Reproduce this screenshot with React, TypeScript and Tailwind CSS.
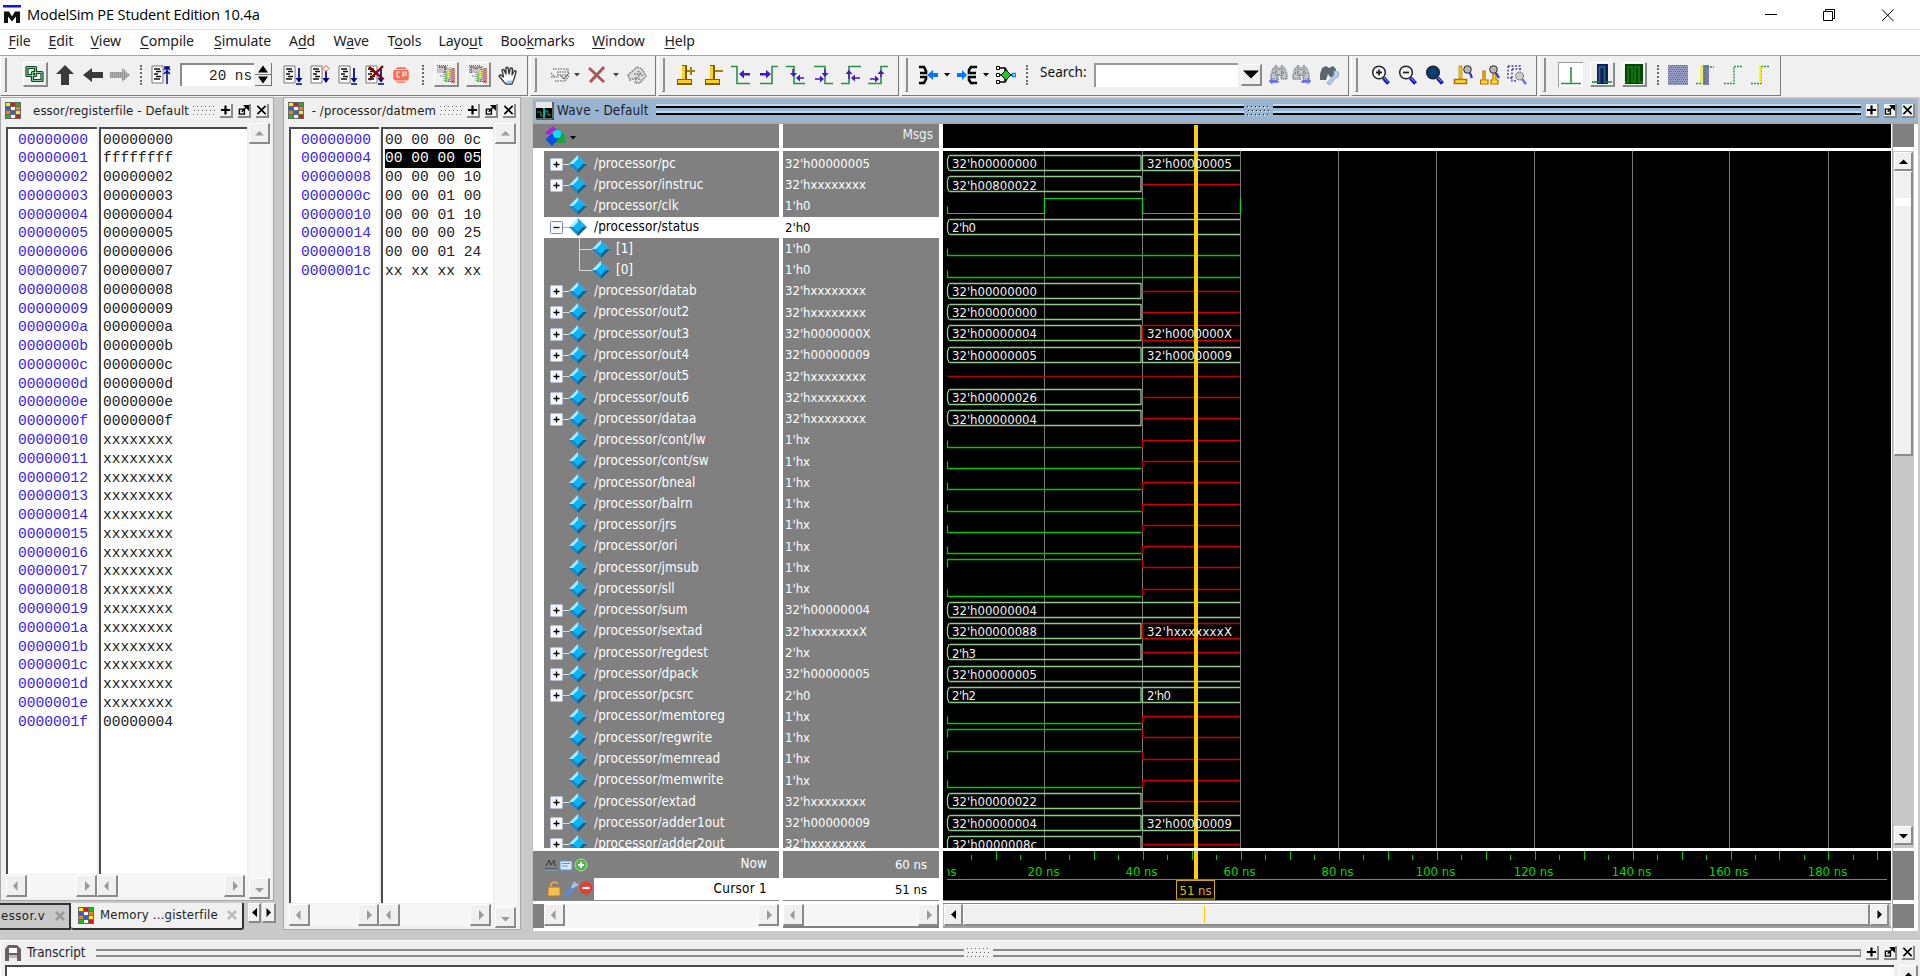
import React from "react";

type Kids = { children?: React.ReactNode; className?: string };

const UI = "font-['DejaVu_Sans_Condensed','DejaVu_Sans',sans-serif] [font-stretch:condensed]";
const RAISED = "bg-[#f0f0f0] border-t border-l border-t-white border-l-white border-b-2 border-r-2 border-b-[#8a8a8a] border-r-[#8a8a8a]";
const TROUGH = "bg-[#f7f7f7]";

/* ---------- small building blocks ---------- */

function Ic({ children, className = "" }: Kids) {
  return (
    <svg viewBox="0 0 20 20" className={"h-5 w-5 shrink-0 " + className} fill="none">
      {children}
    </svg>
  );
}

function Group({ children, className = "" }: Kids) {
  return (
    <div className={"flex h-[40px] shrink-0 items-center border-r border-r-[#7a7a7a] border-b border-b-[#7a7a7a] border-l border-l-white pb-[2px] " + className}>
      <div className="ml-[3px] mr-[5px] h-[34px] w-[3px] border-r-2 border-b border-[#8f8f8f]" />
      {children}
    </div>
  );
}

function Dots({ className = "" }: Kids) {
  return <div className={"w-0 shrink-0 border-l-2 border-dotted border-[#6a6a6a] h-[20px] " + className} />;
}

function Caret({ className = "" }: Kids) {
  return (
    <svg viewBox="0 0 6 4" className={"h-1 w-1.5 shrink-0 " + className}>
      <path d="M0 0h6L3 3.5z" fill="#000" />
    </svg>
  );
}

function Btn({ dir, off, className = "" }: { dir: "u" | "d" | "l" | "r"; off?: boolean; className?: string }) {
  const d = off
    ? { u: "M4 10.500h9L8.500 6z", d: "M4 8h9l-4.500 4.500z", l: "M9.500 4v10L5 9z", r: "M7 4v10l5-5z" }[dir]
    : { u: "M4 11h9L8.500 6.500z", d: "M4 7h9l-4.500 4.500z", l: "M11 4v9L6 8.500z", r: "M6.500 4v9l4.500-4.500z" }[dir];
  return (
    <div className={"flex shrink-0 items-center justify-center overflow-hidden " + RAISED + " " + className}>
      <svg viewBox="0 0 17 17" className="h-[17px] w-[17px] shrink-0">
        <path d={d} fill={off ? "#9a9a9a" : "#000"} />
      </svg>
    </div>
  );
}

function WinBtns({ className = "" }: Kids) {
  const b = "h-[14px] w-[13px] shrink-0 border-r-2 border-b-2 border-[#8a8a8a] bg-[#f3f3f3]";
  return (
    <div className={"flex shrink-0 items-center gap-[5px] " + className}>
      <svg viewBox="0 0 12 12" className={b}><path d="M6 1v10M1 6h10" stroke="#000" strokeWidth="2.400" /></svg>
      <svg viewBox="0 0 12 12" className={b}>
        <path d="M1.500 5h5.500v5.500h-5.500z M4 8l6-6" stroke="#000" strokeWidth="1.500" fill="none" />
        <path d="M5.500 0.500H12V7z" fill="#000" />
      </svg>
      <svg viewBox="0 0 12 12" className={b}><path d="M1.500 1.500l9 9M10.500 1.500l-9 9" stroke="#000" strokeWidth="1.800" /></svg>
    </div>
  );
}

function Grip({ dark }: { dark?: boolean }) {
  return (
    <svg width="23" height="10" className="shrink-0" shapeRendering="crispEdges">
      {[0, 1, 2].map((r) =>
        [0, 1, 2, 3, 4, 5].map((c) => (
          <g key={r + "-" + c}>
            <rect x={c * 4 + (r % 2)} y={r * 4} width="1" height="1" fill={dark ? "#222" : "#666"} />
            <rect x={c * 4 + 1 + (r % 2)} y={r * 4 + 1} width="1" height="1" fill="#fff" />
          </g>
        ))
      )}
    </svg>
  );
}

function MemIcon({ className = "" }: Kids) {
  const c = ["#f5f500", "#e81010", "#18b818", "#3060e0", "#fff", "#f08020", "#f08020", "#3060e0", "#f5f500", "#18c018", "#fff", "#e81010"];
  return (
    <svg viewBox="0 0 16 17" className={"h-[17px] w-4 shrink-0 " + className} shapeRendering="crispEdges">
      <rect width="16" height="17" fill="#666" />
      {c.map((f, i) => (
        <rect key={i} x={1 + (i % 3) * 5} y={1 + Math.floor(i / 3) * 4} width="4" height="3" fill={f} />
      ))}
    </svg>
  );
}

/* ---------- toolbar icons ---------- */

function DocIcon({ kind }: { kind: "up" | "down" | "step" | "over" | "kill" }) {
  return (
    <>
      <path d="M1 1h11v17H1z" fill="#fff" stroke="#777" />
      <path d="M3 4h6M5 6.500h5M3 9h4M5 11.500h5M3 14h6" stroke="#111" strokeWidth="1.600" />
      {kind === "up" && <path d="M16 19V2M13 5l3-3 3 3M13 2h6M13 9l3-3 3 3" stroke="#000090" strokeWidth="1.500" />}
      {(kind === "down" || kind === "over" || kind === "kill") && <path d="M16 3v14M13 19h6" stroke="#000090" strokeWidth="1.700" />}
      {(kind === "down" || kind === "over" || kind === "kill") && <path d="M12.500 13h7l-3.500 4.500z" fill="#000090" />}
      {kind === "step" && (
        <>
          <path d="M16 6v11" stroke="#000090" strokeWidth="1.700" />
          <path d="M12.500 13h7L16 18z" fill="#000090" />
          <path d="M16 0.500l3 3-3 3-3-3z" fill="#fff" stroke="#f04040" />
        </>
      )}
      {kind === "kill" && <path d="M4 2l14 12M18 1L4 15" stroke="#8b0000" strokeWidth="2.400" />}
    </>
  );
}

function BoxBtn({ children, className = "" }: Kids) {
  return (
    <div className={"flex h-[25px] w-[25px] shrink-0 items-center justify-center " + RAISED + " " + className}>{children}</div>
  );
}

function Binoc({ dir }: { dir?: "l" | "r" }) {
  return (
    <>
      <path d="M4 4l3-3 3 3 3-3 3 3 2 6v4h-6v-4H9v4H2v-4z" fill="#c0c6ca" />
      <path d="M4 4l3-3 3 3 3-3 3 3 2 6v4h-6v-4H9v4H2v-4zM4 8h4M12 8h4M7 4v7M13 4v7" stroke="#7a848a" strokeDasharray="1 1" strokeWidth="2" />
      {dir === "l" && <path d="M-0.500 16l4-3.500v2h5l2 3.500H3.500v2z" fill="#6d6df0" stroke="#fff" strokeDasharray="1 1.500" strokeWidth=".7" />}
      {dir === "r" && <path d="M20.500 16l-4-3.500v2h-5l-2 3.500h7v2z" fill="#6d6df0" stroke="#fff" strokeDasharray="1 1.500" strokeWidth=".7" />}
    </>
  );
}

function Lens({ fill = "#f8f8f8", sign = "" }: { fill?: string; sign?: string }) {
  return (
    <>
      <path d="M12.500 13l5 5.500" stroke="#1818b8" strokeWidth="4" />
      <path d="M12 12l5 5" stroke="#7aa0ff" strokeWidth="1" />
      <circle cx="8" cy="7.500" r="6.300" fill={fill} stroke="#222" strokeWidth="1.500" />
      <path d={sign} stroke="#222" strokeWidth="1.800" />
    </>
  );
}

function CursorPin() {
  return (
    <g>
      <path d="M6 1h3v13H6z" fill="#f5cc00" stroke="#9c7400" strokeWidth=".6" />
      <path d="M1.500 14.500h12v4h-12z" fill="#ffdf30" stroke="#b87000" strokeWidth="1.600" />
    </g>
  );
}

const G = "#2c9048";
const P = "#4a14c8";

function Toolbar() {
  return (
    <div className="flex h-[42px] shrink-0 gap-[2px] border-t border-t-[#a5a5a5] bg-[#f0f0f0]">
      <Group className="w-[528px]">
        <BoxBtn className="ml-[11px]">
          <Ic>
            <path d="M2 3.500h8.500v8H2zM7.500 8.500H17v8H7.500z" stroke="#0a4a20" strokeWidth="3.200" strokeLinejoin="round" />
            <path d="M2 3.500h8.500v8H2zM7.500 8.500H17v8H7.500z" stroke="#d0f0d0" strokeWidth=".7" />
          </Ic>
        </BoxBtn>
        <Ic className="ml-[7px]"><path d="M10 0l9 9h-5v11H6V9H1z" fill="#3a3a3a" /></Ic>
        <Ic className="ml-[8px]"><path d="M0 10l9-7v4h11v6H9v4z" fill="#3a3a3a" /></Ic>
        <Ic className="ml-[7px]">
          <path d="M20 10l-8-7v4H0v6h12v4z" fill="#b0b0b0" />
          <path d="M0 8h16M0 10h19M0 12h17M12 5h3M12 14.500h3" stroke="#777" strokeDasharray="1 1" />
        </Ic>
        <Dots className="ml-[10px]" />
        <Ic className="ml-[9px]"><DocIcon kind="up" /></Ic>
        <div className="ml-[9px] flex h-[23px] w-[74px] shrink-0 items-center justify-end border-t-2 border-l-2 border-t-[#8a8a8a] border-l-[#8a8a8a] bg-white pr-[2px] pt-[2px] font-['Liberation_Mono',monospace] text-[14.300px] text-[#222] whitespace-pre">20 ns</div>
        <svg width="17" height="23" className="ml-[1px] shrink-0">
          <rect width="17" height="23" fill="#f0f0f0" />
          <path d="M3 9.500h10l-5-7zM3 13.500h10l-5 7z" fill="#000" />
          <path d="M0 11.500h17M0 22.500h17M16.500 0v23" stroke="#777" />
        </svg>
        <Ic className="ml-[11px]"><DocIcon kind="down" /></Ic>
        <Ic className="ml-[7px]"><DocIcon kind="step" /></Ic>
        <Ic className="ml-[8px]"><DocIcon kind="over" /></Ic>
        <Ic className="ml-[7px]"><DocIcon kind="kill" /></Ic>
        <Ic className="ml-[6px]">
          <path d="M6 2h8l4 4v8l-4 4H6l-4-4V6z" fill="#f4705c" />
          <path d="M6 2h8l4 4v8l-4 4H6l-4-4V6z" stroke="#f0f0f0" strokeDasharray="1 1" />
          <path d="M9 7H6v5h3M12 12V7h3v3h-3M4 4.500h12M4 16h12" stroke="#fbe3df" strokeWidth="1.200" />
        </Ic>
        <Dots className="ml-[11px]" />
        {["M3 3h6v6M9 3l2 2", "M3 9V3h3l2 2 2-2h3v4"].map((d, i) => (
          <BoxBtn key={i} className={i ? "ml-[7px]" : "ml-[10px]"}>
            <Ic>
              <path d="M1 2h9l5 4v12H9V9H1z" fill="#c4c4c4" />
              <path d={d} stroke="#555" strokeWidth="1.500" strokeDasharray="1.500 1" />
              <path d="M9 9h2v9H9z" fill="#5ad860" />
              <path d="M12 6h2v8h-2z" fill="#f0e030" />
              <path d="M15 4h4v15h-4z" fill="#f08080" />
              <path d="M17 4v15M10 17.500h9M4 12h4M12 16h2M1 1.500h12M8 8v10M14 3v15" stroke="#666" strokeDasharray="1 1" />
            </Ic>
          </BoxBtn>
        ))}
        <Ic className="ml-[7px]">
          <path d="M6 17l-5-6 1.500-1.300L5.500 12 4 5l1.800-.6L8 9V2.500h2L11 9l1.500-6 2 .4L14 10l2.500-4.500 1.700.9L16 14l-2 5H8z" fill="#fff" stroke="#333" strokeWidth="1.300" strokeLinejoin="round" />
          <path d="M8 18.500l1-3h6l-1.500 3z" fill="#9cc4f0" />
        </Ic>
      </Group>
      <Group className="w-[126px]">
        <Ic className="ml-[8px]">
          <path d="M3 4h15v3H8v3h10M5 16h10l4-5M1 8l4 4M1 12h8" stroke="#888" strokeWidth="1.600" strokeDasharray="1.500 1" />
          <path d="M11 11l3 3 5-6" stroke="#555" strokeWidth="1.400" strokeDasharray="1.500 .7" />
        </Ic>
        <Caret className="ml-[4px] opacity-70" />
        <Ic className="ml-[7px]">
          <path d="M2 3l15 14M17 2L3 17" stroke="#b05050" strokeWidth="2.600" />
          <path d="M3 3l15 14M18 3L4 18" stroke="#777" strokeDasharray="1 1" />
        </Ic>
        <Caret className="ml-[6px] opacity-70" />
        <Ic className="ml-[8px]">
          <path d="M1 10l9-8 5 2 4 7-6 7H8l1-5-6 2z" fill="#ddd" stroke="#777" strokeWidth="1.500" strokeDasharray="1.500 1" />
          <path d="M7 9h6l-3 4 4 2M11 6l5 5" stroke="#777" strokeWidth="1.500" strokeDasharray="1.500 1" />
        </Ic>
      </Group>
      <Group className="w-[241px]">
        <Ic className="ml-[6px]">
          <path d="M6 1h4v14H2v4h13v-4h-5" fill="none" stroke="#7a5c00" strokeWidth="2" />
          <path d="M6 1h3v13H6zM2 15h13v3H2z" fill="#ffd020" /><path d="M15 2v8M11 6h8" stroke="#a88000" strokeWidth="2" />
        </Ic>
        <Ic className="ml-[8px]">
          <path d="M6 1h4v14H2v4h13v-4h-5" fill="none" stroke="#7a5c00" strokeWidth="2" />
          <path d="M6 1h3v13H6zM2 15h13v3H2z" fill="#ffd020" /><path d="M11 6h8" stroke="#a88000" strokeWidth="2" />
        </Ic>
        <Ic className="ml-[7px]"><path d="M0 1.500h6v17h13" stroke={G} strokeWidth="1.600" /><path d="M8 9l5-4v3h6v2.500h-6v3z" fill={P} /></Ic>
        <Ic className="ml-[8px]"><path d="M1 18.500h12v-17h6" stroke={G} strokeWidth="1.600" /><path d="M12 9L7 5v3H1v2.500h6v3z" fill={P} /></Ic>
        <Ic className="ml-[7px]">
          <path d="M0 1.500h8v17h11" stroke={G} strokeWidth="1.600" />
          <path d="M7 4v6M11 13h7" stroke={P} strokeWidth="1.500" /><path d="M4 8h7l-3.500 4zM14 9.500v7L10 13z" fill={P} />
        </Ic>
        <Ic className="ml-[7px]">
          <path d="M1 1.500h11v17h8" stroke={G} strokeWidth="1.600" />
          <path d="M12 4v6M2 14h7" stroke={P} strokeWidth="1.500" /><path d="M8.500 8h7L12 12zM7 10.500v7l4-3.500z" fill={P} />
        </Ic>
        <Ic className="ml-[8px]">
          <path d="M0 18.500h8v-17h12" stroke={G} strokeWidth="1.600" />
          <path d="M8 14V7M12 13h7" stroke={P} strokeWidth="1.500" /><path d="M4.500 9h7L8 5zM14 9.500v7L10 13z" fill={P} />
        </Ic>
        <Ic className="ml-[7px]">
          <path d="M0 18.500h13v-17h7" stroke={G} strokeWidth="1.600" />
          <path d="M13 12V6M2 14h6" stroke={P} strokeWidth="1.500" /><path d="M9.500 9h7L13 5zM7 10.500v7l4-3.500z" fill={P} />
        </Ic>
      </Group>
      <Group className="w-[448px]">
        <Ic className="ml-[5px]"><path d="M1 2h5l2 4v2H2M1 18h5l2-4v-2H2" stroke="#000" strokeWidth="2.600" /><path d="M9 10l6-5v3h5v4h-5v3z" fill="#0878f8" /></Ic>
        <Caret className="ml-[6px]" />
        <Ic className="ml-[7px]"><path d="M20 2h-6l-2 3v3h7M20 18h-6l-2-3v-3h7" stroke="#000" strokeWidth="2.600" /><path d="M10 10L5 5v3H0v4h5v3z" fill="#0878f8" /></Ic>
        <Caret className="ml-[6px]" />
        <Ic className="ml-[7px]">
          <path d="M2 3h7v14H2M1 10h17M9 3l2 3M9 17l2-3" stroke="#000" strokeWidth="1.400" />
          <path d="M0.500 1.500h3v3h-3zM0.500 8.500h3v3h-3zM0.500 15.500h3v3h-3z" fill="#fff" stroke="#000" />
          <path d="M10 5l5 5-5 5-5-5z" fill="#18d018" stroke="#000" />
          <path d="M16.500 8.500h3v3h-3z" fill="#fff" stroke="#08f" strokeWidth="1.400" />
        </Ic>
        <Dots className="ml-[10px]" />
        <div className="ml-[12px] w-[54px] shrink-0 pb-[4px] font-['Noto_Sans',sans-serif] [font-stretch:normal] text-[13.600px] text-[#111]">Search:</div>
        <div className="h-[24px] w-[144px] shrink-0 border-t-2 border-l-2 border-t-[#999] border-l-[#999] bg-white" />
        <div className={"ml-[3px] flex h-[22px] w-[21px] shrink-0 items-center justify-center " + RAISED}>
          <svg width="16" height="10"><path d="M0 1.500h16l-8 8z" fill="#000" /></svg>
        </div>
        <Ic className="ml-[7px]"><Binoc dir="l" /></Ic>
        <Ic className="ml-[2px]"><Binoc dir="r" /></Ic>
        <Ic className="ml-[8px]">
          <path d="M3 3l4-2 3 2 4-2 3 3-1 8h-5L9 9l-2 6H1V9z" fill="#5b6770" />
          <path d="M8 18l7-8V6l4 1 1 4-4 2-5 7z" fill="#b8cfe8" stroke="#8ba6c4" />
        </Ic>
      </Group>
      <Group className="w-[186px]">
        <Ic className="ml-[8px]"><Lens sign="M5 7.500h6M8 4.500v6" /></Ic>
        <Ic className="ml-[7px]"><Lens sign="M5 7.500h6" /></Ic>
        <Ic className="ml-[7px]"><Lens fill="#063e78" /></Ic>
        <Ic className="ml-[8px]">
          <CursorPin />
          <path d="M17 8l2 5" stroke="#2030ff" strokeWidth="2.200" /><circle cx="14.500" cy="4.500" r="3.800" fill="#b8b8b8" stroke="#222" />
        </Ic>
        <Ic className="ml-[7px]">
          <path d="M3 6v9H0.500v4H8v-4H5V6zM13 9v6h-2v4h7v-4h-2V9z" fill="#ffdf30" stroke="#b87000" strokeWidth="1.200" />
          <path d="M16 8l3 5" stroke="#2030ff" strokeWidth="2.200" /><circle cx="13.500" cy="4.500" r="3.800" fill="#b8b8b8" stroke="#222" />
        </Ic>
        <Ic className="ml-[7px]">
          <path d="M1 1h12v4M1 1v12h5M5 4v12h4M5 4h10" stroke="#4040a8" strokeWidth="1.400" strokeDasharray="2 1.500" />
          <path d="M15 14l4 5" stroke="#7070e8" strokeWidth="2.600" /><circle cx="12.500" cy="11" r="4" fill="#ccc" stroke="#555" strokeDasharray="1.500 .8" />
        </Ic>
      </Group>
      <Group className="w-[242px]">
        <div className="ml-[7px] flex h-[25px] w-[25px] shrink-0 items-center justify-center border-t border-l border-[#999] bg-white">
          <Ic><path d="M10 2v17M0 18.500h20" stroke={G} strokeWidth="1.600" /></Ic>
        </div>
        <BoxBtn className="ml-[7px]"><Ic><path d="M5 0h11v20H5z" fill="#181870" /><path d="M0 18h7.500V3h5v15H20" stroke="#168048" strokeWidth="1.600" /></Ic></BoxBtn>
        <BoxBtn className="ml-[7px]"><Ic><path d="M1 0h18v20H1z" fill="#004800" /><path d="M1 18h3V3h4v15h3V3h4v15h4" stroke="#128012" strokeWidth="1.600" /></Ic></BoxBtn>
        <Dots className="ml-[10px]" />
        <Ic className="ml-[9px]">
          <path d="M0 0h20v20H0z" fill="#9c9cc8" />
          {[0, 2, 4, 6, 8, 10, 12, 14, 16, 18].map((y) => <path key={y} d={`M${(y / 2) % 2} ${y + 0.5}h20`} stroke="#6060a0" strokeDasharray="1 1" />)}
          <path d="M2 18h8V2h9" stroke="#59a880" strokeDasharray="2 1" />
        </Ic>
        <Ic className="ml-[8px]">
          <path d="M7 0h6v20H7z" fill="#7c7cb4" /><path d="M5.500 0v19" stroke="#f0f000" strokeWidth="2" />
          <path d="M0 18.500h6M9 18V2h9" stroke={G} strokeWidth="1.400" strokeDasharray="2 1" />
        </Ic>
        <Ic className="ml-[8px]"><path d="M0 18.500h10V1.500h9" stroke={G} strokeWidth="1.400" strokeDasharray="2 1" /></Ic>
        <Ic className="ml-[7px]"><path d="M0 18.500h10V1.500h9" stroke={G} strokeWidth="1.400" strokeDasharray="2 1" /><path d="M9.500 1v17" stroke="#f0f000" strokeWidth="2" /></Ic>
      </Group>
    </div>
  );
}

/* ---------- memory panels ---------- */

const regs: [string, string][] = Array.from({ length: 32 }, (_, i) => {
  const h = i.toString(16).padStart(8, "0");
  return [h, i === 1 ? "ffffffff" : i === 31 ? "00000004" : i > 15 ? "xxxxxxxx" : h];
});

const dat: [string, string][] = [
  ["00000000", "00 00 00 0c"],
  ["00000004", "00 00 00 05"],
  ["00000008", "00 00 00 10"],
  ["0000000c", "00 00 01 00"],
  ["00000010", "00 00 01 10"],
  ["00000014", "00 00 00 25"],
  ["00000018", "00 00 01 24"],
  ["0000001c", "xx xx xx xx"],
];

function MemPanel({ rows, title, titleCls, colA, colB, hl, className = "" }: {
  rows: [string, string][]; title: string; titleCls: string; colA: string; colB: string; hl?: number; className?: string;
}) {
  const list = "h-full overflow-hidden border-t-2 border-l-2 border-[#4a4a4a] bg-white pt-[1.500px] font-['Liberation_Mono',monospace] text-[14.600px] leading-[18.780px] whitespace-pre";
  return (
    <div className={"flex shrink-0 flex-col border border-[#a8a8a8] bg-[#f0f0f0] pl-[4px] " + className}>
      <div className="flex h-[27px] shrink-0 items-center pb-[2px]">
        <MemIcon />
        <div className={"ml-[6px] flex shrink-0 justify-end overflow-hidden whitespace-nowrap text-[13px] text-[#222] " + titleCls}><span>{title}</span></div>
        <div className="ml-[4px]"><Grip /></div>
        <WinBtns className="ml-[4px]" />
      </div>
      <div className="flex min-h-0 flex-1 gap-[2px]">
        <div className="flex flex-col pt-[2px] pl-[1px] pb-[3px]">
          <div className="flex min-h-0 flex-1 gap-[2px]">
            <div className={list + " pl-[10px] text-[#3a22f0] " + colA}>{rows.map((r) => <div key={r[0]}>{r[0]}</div>)}</div>
            <div className={list + " pl-[2px] text-[#222] " + colB}>
              {rows.map((r, i) => (
                <div key={r[0]}><span className={i === hl ? "inline-block bg-black text-white" : ""}>{r[1]}</span></div>
              ))}
            </div>
          </div>
          <div className="mt-[1px] flex h-[22px] shrink-0">
            <div className={"flex justify-between " + TROUGH + " " + colA}><Btn dir="l" off className="h-[22px] w-[21px]" /><Btn dir="r" off className="h-[22px] w-[21px]" /></div>
            <div className={"flex justify-between pr-[2px] box-content " + TROUGH + " " + colB}><Btn dir="l" off className="h-[22px] w-[21px]" /><Btn dir="r" off className="h-[22px] w-[21px]" /></div>
          </div>
        </div>
        <div className={"-mt-[2px] mb-[1px] flex w-[22px] flex-col justify-between " + TROUGH}>
          <Btn dir="u" off className="h-[21px] w-[21px]" />
          <Btn dir="d" off className="h-[21px] w-[21px]" />
        </div>
      </div>
    </div>
  );
}

/* ---------- wave panel ---------- */

type Sig = { n: string; v: string; x?: "+" | "-"; w: string; a?: string; b?: string; t?: 1 | 2 };
/* w: two letters, first for 0-40 ns and second for 40-60 ns.
   B bus, R unknown bus, x unknown line, L low, H high, c continues, K clock */
const sigs: Sig[] = [
  { n: "/processor/pc", v: "32'h00000005", x: "+", w: "BB", a: "32'h00000000", b: "32'h00000005" },
  { n: "/processor/instruc", v: "32'hxxxxxxxx", x: "+", w: "Bx", a: "32'h00800022" },
  { n: "/processor/clk", v: "1'h0", w: "KK" },
  { n: "/processor/status", v: "2'h0", x: "-", w: "Bc", a: "2'h0" },
  { n: "[1]", v: "1'h0", w: "LL", t: 1 },
  { n: "[0]", v: "1'h0", w: "LL", t: 2 },
  { n: "/processor/datab", v: "32'hxxxxxxxx", x: "+", w: "Bx", a: "32'h00000000" },
  { n: "/processor/out2", v: "32'hxxxxxxxx", x: "+", w: "Bx", a: "32'h00000000" },
  { n: "/processor/out3", v: "32'h0000000X", x: "+", w: "BR", a: "32'h00000004", b: "32'h0000000X" },
  { n: "/processor/out4", v: "32'h00000009", x: "+", w: "BB", a: "32'h00000005", b: "32'h00000009" },
  { n: "/processor/out5", v: "32'hxxxxxxxx", x: "+", w: "xx" },
  { n: "/processor/out6", v: "32'hxxxxxxxx", x: "+", w: "Bx", a: "32'h00000026" },
  { n: "/processor/dataa", v: "32'hxxxxxxxx", x: "+", w: "Bx", a: "32'h00000004" },
  { n: "/processor/cont/lw", v: "1'hx", w: "Lx" },
  { n: "/processor/cont/sw", v: "1'hx", w: "Lx" },
  { n: "/processor/bneal", v: "1'hx", w: "Lx" },
  { n: "/processor/balrn", v: "1'hx", w: "Lx" },
  { n: "/processor/jrs", v: "1'hx", w: "Lx" },
  { n: "/processor/ori", v: "1'hx", w: "Lx" },
  { n: "/processor/jmsub", v: "1'hx", w: "Hx" },
  { n: "/processor/sll", v: "1'hx", w: "Lx" },
  { n: "/processor/sum", v: "32'h00000004", x: "+", w: "Bc", a: "32'h00000004" },
  { n: "/processor/sextad", v: "32'hxxxxxxxX", x: "+", w: "BR", a: "32'h00000088", b: "32'hxxxxxxxX" },
  { n: "/processor/regdest", v: "2'hx", x: "+", w: "Bx", a: "2'h3" },
  { n: "/processor/dpack", v: "32'h00000005", x: "+", w: "Bc", a: "32'h00000005" },
  { n: "/processor/pcsrc", v: "2'h0", x: "+", w: "BB", a: "2'h2", b: "2'h0" },
  { n: "/processor/memtoreg", v: "1'hx", w: "Lx" },
  { n: "/processor/regwrite", v: "1'hx", w: "Hx" },
  { n: "/processor/memread", v: "1'hx", w: "Hx" },
  { n: "/processor/memwrite", v: "1'hx", w: "Lx" },
  { n: "/processor/extad", v: "32'hxxxxxxxx", x: "+", w: "Bx", a: "32'h00000022" },
  { n: "/processor/adder1out", v: "32'h00000009", x: "+", w: "BB", a: "32'h00000004", b: "32'h00000009" },
  { n: "/processor/adder2out", v: "32'hxxxxxxxx", x: "+", w: "Bx", a: "32'h0000008c" },
];

function Diamond() {
  return (
    <svg viewBox="0 0 18 18" className="h-[18px] w-[18px] shrink-0">
      <path d="M9 0L0 9h9z" fill="#a8ecff" />
      <path d="M9 0l9 9H9z" fill="#30a8e0" />
      <path d="M0 9l9 9V9z" fill="#1888c8" />
      <path d="M18 9l-9 9V9z" fill="#0a6090" />
      <path d="M9 4l5 5-5 5-5-5z" fill="#04b8f8" />
    </svg>
  );
}

function NameRow({ s }: { s: Sig }) {
  const sel = s.x === "-";
  return (
    <div className={"flex h-[21.270px] shrink-0 items-center whitespace-pre " + (sel ? "bg-white text-black" : "text-white")}>
      {s.t ? (
        <svg width="22" height="21" className="ml-[34px] shrink-0 overflow-visible">
          <path d={s.t === 1 ? "M1.500 -1v23M1.500 11.500h14" : "M1.500 -1v12.500h14"} stroke="#d8d8d8" fill="none" />
        </svg>
      ) : s.x ? (
        <svg width="20" height="14" className="ml-[6px] mt-[2px] shrink-0 overflow-visible">
          <path d="M13 6.500h8" stroke={sel ? "#b0b0b0" : "#e0e0e0"} />
          <rect x="0.500" y="0.500" width="12" height="12" rx="1" fill="#f6f8fb" stroke={sel ? "#7d8aa5" : "#b4bed4"} />
          <path d={sel ? "M3.500 6.500h6" : "M3.500 6.500h6M6.500 3.500v6"} stroke="#000" strokeWidth="1.300" />
        </svg>
      ) : (
        <div className="ml-[6px] w-[20px] shrink-0" />
      )}
      <div className={s.t ? "-ml-[8px] flex" : "-ml-[1px] flex"}><Diamond /></div>
      <span className={s.t ? "ml-[6px]" : "ml-[7px] tracking-[0.080px]"}>{s.n}</span>
    </div>
  );
}

const GRID = [101, 199, 297, 395, 493, 591, 689, 786, 885];
const RH = 21.27;
const BUS = "#90c890";

function Trace({ s, i }: { s: Sig; i: number }) {
  const c = Math.round(12.2 + i * RH) + 0.5;
  const t = c - 8, b = c + 7;
  const [p, q] = s.w.split("");
  const X0 = 4.5, X1 = 198.5, X2 = 297;
  const xe = q === "c" ? X2 : X1;
  return (
    <g fill="none" strokeWidth="1">
      {p === "B" && <path d={`M${X0 + 2} ${t}H${xe}M${X0 + 2} ${b}H${xe}M${X0 + 1.5} ${t}L${X0} ${t + 4}V${b - 4}L${X0 + 1.5} ${b}${q !== "c" ? `M${X1 - 0.5} ${t}V${b}` : ""}`} stroke={BUS} strokeWidth="1.300" />}
      {p === "L" && <path d={`M${X0} ${b - 7}V${b}H${q === "L" ? X2 : X1}`} stroke="#00c800" strokeWidth="1.300" />}
      {p === "H" && <path d={`M${X0} ${t + 8}V${t}H${X1}`} stroke="#00c800" strokeWidth="1.300" />}
      {p === "K" && <path d={`M${X0} ${b - 7}V${b}H101.500V${t}H${X1 + 1}V${b}H297.500V${t}`} stroke="#00e000" strokeWidth="1.200" />}
      {p === "x" && <path d={`M${X0} ${c}H${X2}`} stroke="#b00000" strokeWidth="1.300" />}
      {p !== "x" && q === "x" && <path d={`M${X1 + 1} ${p === "L" ? b : p === "H" ? t : c}V${c}H${X2}`} stroke="#d00000" strokeWidth="1.300" />}
      {(q === "B" || q === "R") && <path d={`M${X1 + 1} ${t}V${b}M${X1 + 1} ${t}H${X2}M${X1 + 1} ${b}H${X2}`} stroke={q === "R" ? "#c80000" : BUS} strokeWidth="1.300" />}
    </g>
  );
}

function TraceText({ s, i }: { s: Sig; i: number }) {
  const y = 17.3 + i * RH;
  return (
    <g className={UI + " text-[13px]"} fill="#f0f0f0">
      {s.a && <text x="9" y={y} textLength={s.a.length > 5 ? 85 : 24}>{s.a}</text>}
      {s.b && <text x="204" y={y} textLength={s.b.length > 5 ? 85 : 24}>{s.b}</text>}
    </g>
  );
}

function WaveTitle() {
  const line = "flex-1 h-[9px] border-t-2 border-b-2 border-black bg-[#99b4d1] shadow-[0_-2px_0_#b8dcf0,inset_0_-2px_0_#b8dcf0]";
  return (
    <div className="flex h-[23px] shrink-0 items-center bg-[#99b4d1] pl-[3px] pr-[3px]">
      <svg width="18" height="18" className="shrink-0">
        <rect width="18" height="18" fill="#e8e8e8" />
        <path d="M0 6h16v10H0z" fill="#000" />
        <path d="M1 10h4v4h2M9 13V9h3v4h3" stroke="#10b050" fill="none" />
        <path d="M8 6v10" stroke="#00e0f0" strokeWidth="1.500" />
        <path d="M0 17h18M17 0v18" stroke="#333" strokeWidth="1.500" />
      </svg>
      <div className="ml-[3px] w-[99px] shrink-0 whitespace-pre pt-px text-[13.400px] tracking-[0.200px] text-[#1a1a2a]">Wave - Default</div>
      <div className={line} />
      <div className="mx-[3px]"><Grip dark /></div>
      <div className={line} />
      <WinBtns className="ml-[5px]" />
    </div>
  );
}

function WavePanel() {
  return (
    <div className="mt-px flex min-w-0 flex-1 flex-col border-t border-l border-[#c0c0c0] bg-white">
      <WaveTitle />
      <div className="flex min-h-0 flex-1 border-t-2 border-[#aaa]">
        {/* names */}
        <div className="flex w-[246px] shrink-0 flex-col">
          <div className="flex h-[24px] shrink-0 items-center bg-[#808080] pl-[12px] pb-px">
            <svg width="20" height="20" className="shrink-0">
              <path d="M8 0l8 8h-5L8 5 4 9l-4-2z" fill="#b020d0" />
              <path d="M9 8h11v9H9z" fill="#20a040" />
              <path d="M7 7l6 6.500-6 6.500-6.500-6.500z" fill="#0850e0" />
              <circle cx="12" cy="8" r="4" fill="#00e4ff" />
            </svg>
            <Caret className="ml-[5px] mt-[4px]" />
          </div>
          <div className="h-[3px] shrink-0" />
          <div className="flex h-[697px] shrink-0 pl-[11px]">
            <div className="flex flex-1 flex-col overflow-hidden bg-[#808080] pt-[2px] text-[13.400px]">
              {sigs.map((s) => <NameRow key={s.n} s={s} />)}
            </div>
          </div>
          <div className="h-[3px] shrink-0" />
          <div className="flex h-[27px] shrink-0 items-center bg-[#808080] pl-[12px] pr-[12px] text-[13.400px] text-white">
            <svg width="44" height="16">
              <path d="M0 12h12M1 9l3-6 2 5 3-5 1 6" stroke="#333" fill="none" /><path d="M0 13h12" stroke="#68b0ff" />
              <path d="M15 4h12v9H15z" fill="#d8e8ff" stroke="#6090d0" /><path d="M17 6.500h8M17 9h6" stroke="#6090d0" />
              <circle cx="36" cy="8" r="6" fill="#50b848" stroke="#a8dca0" /><path d="M36 5v6M33 8h6" stroke="#fff" strokeWidth="2" />
            </svg>
            <span className="ml-auto tracking-[0.100px]">Now</span>
          </div>
          <div className="flex h-[22px] shrink-0 bg-[#808080] text-[13.400px]">
            <svg width="50" height="20" className="ml-[11px] shrink-0">
              <path d="M7 10V6a4 4 0 0 1 7 0" stroke="#d8a848" strokeWidth="2" fill="none" /><path d="M4 9h12v9H4z" fill="#f5c050" stroke="#b88020" />
              <path d="M22 17l7-8" stroke="#5c88d8" strokeWidth="4" strokeLinecap="round" /><path d="M28 10l3-6M29 9l5-3" stroke="#a8c0e8" strokeWidth="2.500" />
              <circle cx="42" cy="10" r="6.500" fill="#e04030" /><path d="M38.500 10h7" stroke="#fff" strokeWidth="2.200" />
            </svg>
            <div className="flex flex-1 items-center justify-end bg-white pr-[12px] pt-px tracking-[0.300px] text-black">Cursor 1</div>
          </div>
          <div className="h-[4px] shrink-0 border-t border-[#888]" />
          <div className="flex h-[24px] shrink-0 justify-between bg-[#808080] pl-[11px]">
            <div className={"flex flex-1 justify-between " + TROUGH}><Btn dir="l" off className="h-[22px] w-[21px]" /><Btn dir="r" off className="h-[22px] w-[21px]" /></div>
          </div>
        </div>
        {/* values */}
        <div className="ml-[4px] flex w-[156px] shrink-0 flex-col text-[13px] text-white">
          <div className="flex h-[24px] shrink-0 items-center justify-end bg-[#808080] pr-[6px] pb-px text-[13.400px] text-[#eee]">Msgs</div>
          <div className="mt-[3px] h-[697px] shrink-0 overflow-hidden bg-[#808080] pt-[2px]">
            {sigs.map((s) => (
              <div key={s.n} className={"flex h-[21.270px] items-center whitespace-pre pl-[2px] " + (s.x === "-" ? "bg-white text-black" : "")}>{s.v}</div>
            ))}
          </div>
          <div className="mt-[3px] flex h-[27px] shrink-0 items-center justify-end bg-[#808080] pr-[12px]">60 ns</div>
          <div className="flex h-[22px] shrink-0 items-center justify-end pr-[12px] pt-px text-black">51 ns</div>
          <div className="h-[4px] shrink-0 border-t border-[#888]" />
          <div className={"flex h-[24px] shrink-0 justify-between border-b-2 border-[#808080] " + TROUGH}><Btn dir="l" off className="h-[22px] w-[21px]" /><Btn dir="r" off className="h-[22px] w-[21px]" /></div>
        </div>
        {/* traces */}
        <div className="ml-[4px] flex w-[948px] shrink-0 flex-col">
          <div className="flex h-[24px] shrink-0 bg-black pl-[251px]"><div className="mt-[1px] w-[4px] bg-[#ffd000]" /></div>
          <svg width="948" height="697" className="mt-[3px] block shrink-0 bg-black">
            {GRID.map((x) => <path key={x} d={`M${x + 0.5} 0V698`} stroke="#7c7c7c" />)}
            {sigs.map((s, i) => <Trace key={s.n} s={s} i={i} />)}
            <rect x="251" width="4" height="698" fill="#ffd000" />
            {sigs.map((s, i) => <TraceText key={s.n} s={s} i={i} />)}
          </svg>
          <svg width="948" height="49" className={"mt-[3px] block shrink-0 bg-black text-[13px] " + UI}>
            {Array.from({ length: 38 }, (_, k) => {
              const x = Math.round(4 + (k + 1) * 24.485) + 0.5;
              return <path key={k} d={k % 2 ? `M${x} 0V9` : `M${x} 4V9`} stroke="#00c800" />;
            })}
            <g fill="#00dc00" textAnchor="middle">
              {[20, 40, 60, 80, 100, 120, 140, 160, 180].map((n, k) => <text key={n} x={GRID[k] - 0.5} y="24.500">{n} ns</text>)}
              <text x="0" y="24.500" textAnchor="start">ns</text>
            </g>
            <rect width="4" height="27" fill="#000" />
            <path d="M4 28.500H944" stroke="#808080" />
            <rect x="251" width="4" height="28" fill="#ffd000" />
            <rect x="233.500" y="29.500" width="38" height="18.500" fill="#000" stroke="#d0a800" />
            <text x="252.500" y="44" textAnchor="middle" fill="#e0b800">51 ns</text>
          </svg>
          <div className="h-[4px] shrink-0 border-t border-b border-[#888]" />
          <div className="flex h-[24px] shrink-0 border-b-2 border-[#a0a0a0] bg-[#c8c8c8] pl-px pr-[2px]">
            <Btn dir="l" className="h-[22px] w-[19px]" />
            <div className={"flex flex-1 py-[1px] pl-[240px] " + RAISED}><div className="w-[1px] bg-[#ffcc00]" /></div>
            <Btn dir="r" className="h-[22px] w-[19px]" />
          </div>
        </div>
        <div className="ml-[1px] flex w-[22px] shrink-0 flex-col border-l border-[#b0b0b0]">
          <div className="h-[23px] shrink-0 bg-[#808080]" />
          <div className="mt-[4px] flex h-[697px] shrink-0 flex-col bg-[#c8c8c8] px-[1px] pt-[1px]">
            <Btn dir="u" className="h-[19px] w-[19px]" />
            <div className={"h-[285px] w-[19px] pt-[26px] " + RAISED}><div className="h-[8px] bg-white" /></div>
            <Btn dir="d" className="mt-auto mb-[3px] h-[19px] w-[19px]" />
          </div>
          <div className="mt-[3px] h-[49px] shrink-0 bg-[#808080]" />
          <div className="mt-[4px] h-[24px] shrink-0 bg-[#808080]" />
        </div>
      </div>
    </div>
  );
}

/* ---------- page ---------- */

const menus: [string, number, string][] = [
  ["File", 0, "w-[40px]"], ["Edit", 0, "w-[42px]"], ["View", 0, "w-[49.500px]"], ["Compile", 0, "w-[74px]"], ["Simulate", 0, "w-[75px]"],
  ["Add", 1, "w-[44.500px]"], ["Wave", 1, "w-[54px]"], ["Tools", 1, "w-[51px]"], ["Layout", 4, "w-[62px]"], ["Bookmarks", 3, "w-[91.500px]"],
  ["Window", 0, "w-[72.500px]"], ["Help", 0, "w-[60px]"],
];

export default function App() {
  return (
    <div className={"flex h-[976px] w-[1920px] flex-col overflow-hidden bg-[#c9c9c9] " + UI}>
      <div className="flex h-[30px] shrink-0 items-center border-b border-[#e2e2e2] bg-white pl-[3px]">
        <svg width="18" height="19" className="shrink-0">
          <path d="M0 0h18v2.500H0z" fill="#1010ff" />
          <path d="M1 6.500h5l3 5 3-5h5V18h-4v-6.500L9 16.500 5 11.500V18H1z" fill="#111" />
        </svg>
        <div className="ml-[6px] whitespace-pre font-['Open_Sans','Noto_Sans',sans-serif] [font-stretch:normal] text-[14.700px] tracking-[-0.200px] text-black">ModelSim PE Student Edition 10.4a</div>
        <svg width="136" height="14" className="ml-auto mr-[20px] shrink-0" fill="none" stroke="#000">
          <path d="M1 6.500h12M59.500 3.500h9v9h-9zM61.500 3.500V1.500h9v9h-2M118 1.500l11.500 11.500M129.500 1.500L118 13" />
        </svg>
      </div>
      <div className="flex h-[25px] shrink-0 items-center bg-white pb-[3px] pl-[8.500px] font-['Noto_Sans',sans-serif] [font-stretch:normal] text-[14.100px] text-[#222]">
        {menus.map(([m, k, w]) => (
          <div key={m} className={"shrink-0 whitespace-pre tracking-[-0.100px] " + w}>
            {m.slice(0, k)}<span className="underline underline-offset-2">{m[k]}</span>{m.slice(k + 1)}
          </div>
        ))}
      </div>
      <Toolbar />
      <div className="flex h-[834px] shrink-0">
        <div className="flex w-[283px] shrink-0 flex-col">
          <MemPanel className="h-[804px] w-[274px]" rows={regs} title="essor/registerfile - Default" titleCls="w-[162px] tracking-[0.120px]" colA="w-[91px]" colB="w-[148px]" />
          <div className="mt-[2px] flex h-[27px] text-[13px] text-[#222]">
            <div className="flex w-[71px] items-center justify-end overflow-hidden border-t-2 border-r-2 border-b-2 border-[#333] bg-[#c9c9c9] pr-[4px] pb-[1px]">
              <span className="whitespace-nowrap tracking-[0.450px]">essor.v</span>
              <svg width="10" height="10" className="ml-[10px] shrink-0"><path d="M1 1l8 8M9 1L1 9" stroke="#999" strokeWidth="2.500" /></svg>
            </div>
            <div className="flex w-[173px] items-center rounded-b-[3px] border-r-2 border-b-2 border-[#333] bg-[#f0f0f0] pl-[7px] pb-[1px]">
              <MemIcon />
              <span className="ml-[6px] w-[119px] shrink-0 whitespace-nowrap tracking-[0.220px]">Memory ...gisterfile</span>
              <svg width="10" height="10" className="ml-[8px] shrink-0"><path d="M1 1l8 8M9 1L1 9" stroke="#bbb" strokeWidth="2.500" /></svg>
            </div>
            <Btn dir="l" className="ml-[4px] h-[20px] w-[13px]" />
            <Btn dir="r" className="ml-px h-[20px] w-[14px]" />
          </div>
        </div>
        <MemPanel className="h-[833px] w-[238px]" rows={dat} title="- /processor/datmem" titleCls="w-[126px] tracking-[0.130px]" colA="w-[90px]" colB="w-[112px]" hl={1} />
        <div className="w-[11px] shrink-0" />
        <WavePanel />
        <div className="w-[2px] shrink-0" />
      </div>
      <div className="mt-[9px] flex min-h-0 flex-1 flex-col border-t border-l border-white bg-[#f0f0f0]">
        <div className="flex h-[24px] shrink-0 items-center pl-[4px]">
          <svg width="17" height="18" className="shrink-0">
            <path d="M0 17V5l3-4h9l4 4v12h-4v-3H4v3z" fill="#6a6262" /><path d="M4 4h8v5H4z" fill="#fff" /><path d="M4 11h8v3H4z" fill="#bbb" />
          </svg>
          <div className="ml-[5px] w-[69px] text-[13.300px] text-[#222]">Transcript</div>
          <div className="h-[8px] flex-1 border-t-2 border-b-2 border-[#8a8a8a]" />
          <div className="mx-[3px]"><Grip /></div>
          <div className="h-[8px] flex-1 border-t-2 border-r border-b-2 border-[#8a8a8a]" />
          <WinBtns className="ml-[5px] mr-[5px]" />
        </div>
        <div className="flex flex-1 pl-[4px]">
          <div className="flex-1 border-t-2 border-l-2 border-[#4a4a4a] bg-white" />
          <div className="ml-[5px] w-[21px] overflow-hidden"><Btn dir="u" className="h-[20px] w-[19px]" /></div>
        </div>
      </div>
    </div>
  );
}
